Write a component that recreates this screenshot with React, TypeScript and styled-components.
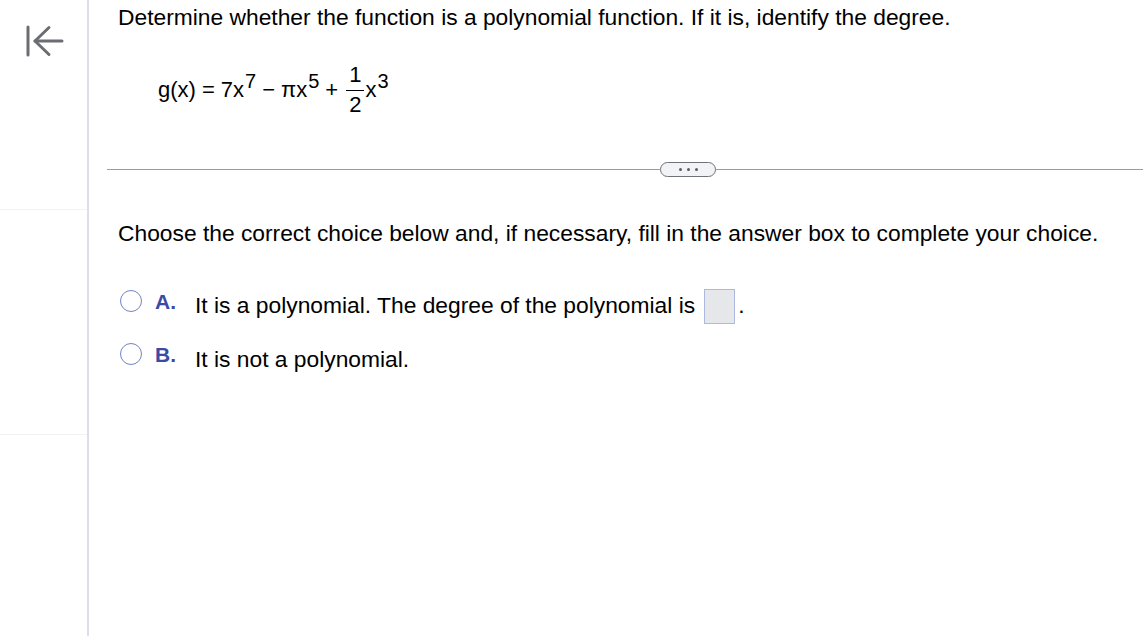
import styled, { createGlobalStyle } from 'styled-components';

const GlobalStyle = createGlobalStyle`
  html, body {
    margin: 0;
    padding: 0;
    background: #ffffff;
    font-family: Arial, "Liberation Sans", Helvetica, sans-serif;
    color: #000;
  }
`;

const Page = styled.div`
  display: flex;
  width: 1143px;
  height: 636px;
  overflow: hidden;
`;

const Sidebar = styled.div`
  width: 87px;
  flex-shrink: 0;
  border-right: 2px solid #dcdfe8;
  display: flex;
  flex-direction: column;
`;

const SideTop = styled.div`
  height: 210px;
  border-bottom: 1px solid #f2f2f4;
  box-sizing: border-box;
  padding: 25px 0 0 25px;
`;

const SideMid = styled.div`
  height: 224px;
  border-bottom: 1px solid #f2f2f4;
`;

const CollapseButton = styled.button`
  width: 40px;
  height: 32px;
  border: none;
  background: transparent;
  padding: 0;
  cursor: pointer;
  display: block;
`;

const Main = styled.div`
  flex: 1;
  display: flex;
  flex-direction: column;
  padding-left: 18px;
`;

const Question = styled.div`
  font-size: 22.8px;
  padding-left: 11px;
  padding-top: 4px;
  line-height: 26px;
`;

const Equation = styled.div`
  display: flex;
  align-items: center;
  margin-left: 51px;
  margin-top: 30px;
  height: 60px;
  font-size: 22px;
  white-space: pre;
`;

const Op = styled.span`
  margin: 0 6px;
`;

const Sup = styled.span`
  font-size: 20px;
  align-self: flex-start;
  margin-top: 10px;
  margin-left: 1px;
`;

const Fraction = styled.span`
  display: inline-flex;
  flex-direction: column;
  align-items: center;
  font-size: 22px;
  line-height: 24px;
  margin: 0 1px 0 2px;
  & > span:first-child {
    border-bottom: 1.5px solid #000;
    padding: 0 3px 3px;
  }
  & > span:last-child {
    padding-top: 2px;
  }
`;

const Divider = styled.div`
  display: flex;
  align-items: center;
  margin-top: 42px;
  height: 15px;
`;

const Line = styled.div<{ $width?: number }>`
  flex: ${p => (p.$width ? `0 0 ${p.$width}px` : '1')};
  height: 1.5px;
  background: #9a9ba3;
`;

const MoreButton = styled.button`
  width: 56px;
  height: 15px;
  box-sizing: border-box;
  border: 1.5px solid #6f7178;
  border-radius: 8px;
  background: #f2f3f7;
  padding: 0;
  display: flex;
  align-items: center;
  justify-content: center;
  gap: 5px;
  & > i {
    width: 3px;
    height: 3px;
    border-radius: 50%;
    background: #5a5c63;
  }
`;

const Instruction = styled.div`
  font-size: 22.8px;
  padding-left: 11px;
  margin-top: 43px;
  line-height: 26px;
`;

const Options = styled.div`
  display: flex;
  flex-direction: column;
  gap: 17px;
  margin-top: 42px;
  padding-left: 13px;
`;

const Option = styled.label`
  display: flex;
  align-items: center;
  height: 36px;
  font-size: 22.8px;
`;

const Radio = styled.span`
  width: 22px;
  height: 22px;
  flex-shrink: 0;
  border-radius: 50%;
  border: 1.8px solid #7482c8;
  box-sizing: border-box;
  margin-right: 13px;
  margin-bottom: 10px;
`;

const Letter = styled.span`
  color: #3b4aa5;
  font-weight: bold;
  font-size: 21px;
  width: 40px;
  margin-bottom: 9px;
`;

const AnswerBox = styled.span`
  display: inline-block;
  width: 31px;
  height: 35px;
  box-sizing: border-box;
  background: #e6e7ea;
  border: 1.5px solid #aeb9e2;
  margin: 0 3px 0 9px;
  vertical-align: middle;
`;

export default function App() {
  return (
    <>
      <GlobalStyle />
      <Page>
        <Sidebar>
          <SideTop>
            <CollapseButton aria-label="collapse">
              <svg width="40" height="32" viewBox="0 0 40 32" fill="none" stroke="#6b6d72" strokeWidth="3" strokeLinecap="round" strokeLinejoin="round">
                <line x1="3" y1="2" x2="3" y2="30" />
                <line x1="10" y1="16" x2="37" y2="16" />
                <polyline points="24,2.5 10,16 24,29.5" />
              </svg>
            </CollapseButton>
          </SideTop>
          <SideMid />
        </Sidebar>
        <Main>
          <Question>Determine whether the function is a polynomial function. If it is, identify the degree.</Question>
          <Equation>
            g(x)<Op>=</Op>7x<Sup>7</Sup>
            <Op>−</Op>πx<Sup>5</Sup>
            <Op>+</Op>
            <Fraction>
              <span>1</span>
              <span>2</span>
            </Fraction>
            x<Sup>3</Sup>
          </Equation>
          <Divider>
            <Line $width={553} />
            <MoreButton aria-label="more">
              <i />
              <i />
              <i />
            </MoreButton>
            <Line />
          </Divider>
          <Instruction>Choose the correct choice below and, if necessary, fill in the answer box to complete your choice.</Instruction>
          <Options>
            <Option>
              <Radio />
              <Letter>A.</Letter>
              <span>
                It is a polynomial. The degree of the polynomial is
                <AnswerBox />.
              </span>
            </Option>
            <Option>
              <Radio />
              <Letter>B.</Letter>
              <span>It is not a polynomial.</span>
            </Option>
          </Options>
        </Main>
      </Page>
    </>
  );
}
